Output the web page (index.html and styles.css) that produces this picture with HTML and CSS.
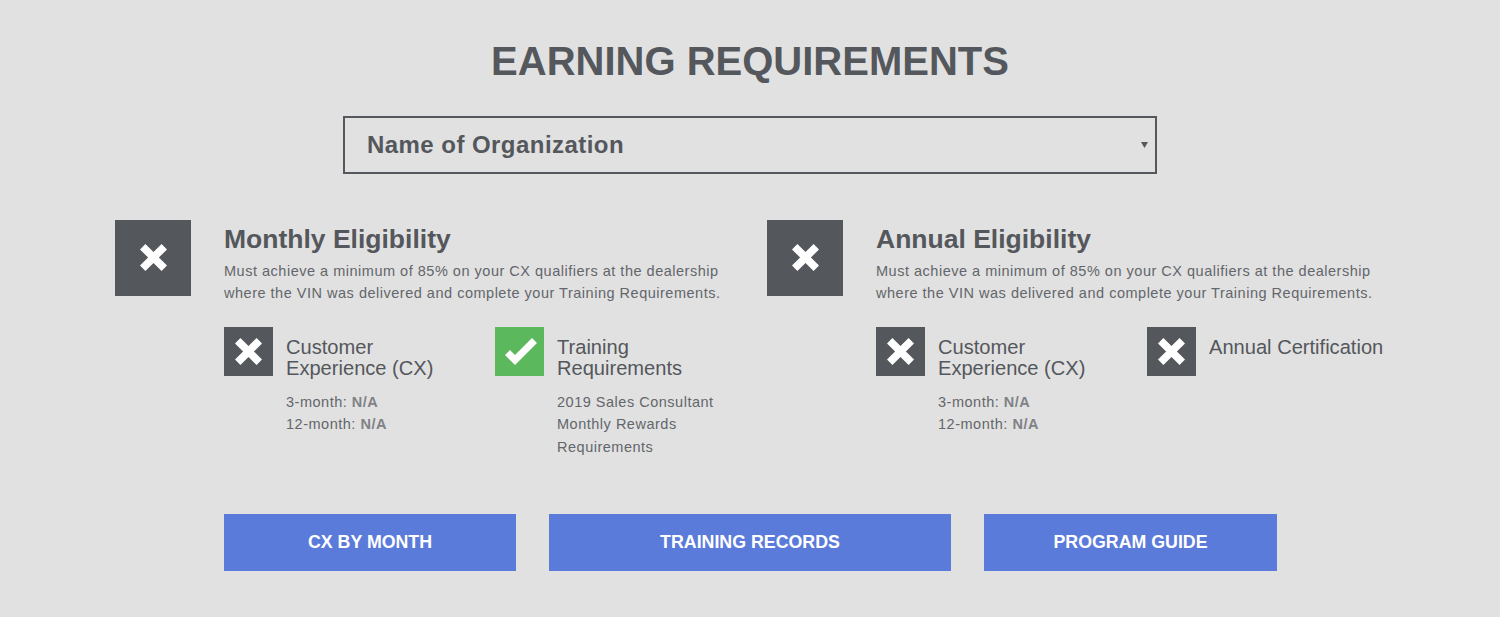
FILE: index.html
```html
<!DOCTYPE html>
<html lang="en">
<head>
    <meta charset="UTF-8">
    <meta name="viewport" content="width=device-width, initial-scale=1.0">
    <title>Earning Requirements</title>
    <link rel="stylesheet" href="styles.css">
</head>
<body>
    <div class="container">
        <h1>EARNING REQUIREMENTS</h1>

        <div class="org-select">
            <span>Name of Organization</span>
            <svg class="org-arrow" viewBox="0 0 7 6"><path d="M0 0H7L3.500 6Z"/></svg>
        </div>

        <div class="columns">
            <!-- Monthly -->
            <section class="column">
                <div class="status status-large">
                    <svg class="icon-x" viewBox="4 4 20 20"><path class="mark" d="M4 8 8 4l6 6 6-6 4 4-6 6 6 6-4 4-6-6-6 6-4-4 6-6Z"/></svg>
                </div>
                <div class="column-body">
                    <h2>Monthly Eligibility</h2>
                    <p class="summary">Must achieve a minimum of 85% on your CX qualifiers at the dealership<br>where the VIN was delivered and complete your Training Requirements.</p>
                    <div class="items">
                        <div class="item">
                            <div class="status">
                                <svg class="icon-x" viewBox="4 4 20 20"><path class="mark" d="M4 8 8 4l6 6 6-6 4 4-6 6 6 6-4 4-6-6-6 6-4-4 6-6Z"/></svg>
                            </div>
                            <div class="item-text">
                                <h3>Customer<br>Experience (CX)</h3>
                                <p>3-month: <b>N/A</b><br>12-month: <b>N/A</b></p>
                            </div>
                        </div>
                        <div class="item">
                            <div class="status status-ok">
                                <svg class="icon-check" viewBox="0 0 32 27"><path class="mark" d="M0 17 5 12 10 17 27 0 32 5 10 27Z"/></svg>
                            </div>
                            <div class="item-text">
                                <h3>Training<br>Requirements</h3>
                                <p>2019 Sales Consultant<br>Monthly Rewards<br>Requirements</p>
                            </div>
                        </div>
                    </div>
                </div>
            </section>

            <!-- Annual -->
            <section class="column">
                <div class="status status-large">
                    <svg class="icon-x" viewBox="4 4 20 20"><path class="mark" d="M4 8 8 4l6 6 6-6 4 4-6 6 6 6-4 4-6-6-6 6-4-4 6-6Z"/></svg>
                </div>
                <div class="column-body">
                    <h2>Annual Eligibility</h2>
                    <p class="summary">Must achieve a minimum of 85% on your CX qualifiers at the dealership<br>where the VIN was delivered and complete your Training Requirements.</p>
                    <div class="items">
                        <div class="item">
                            <div class="status">
                                <svg class="icon-x" viewBox="4 4 20 20"><path class="mark" d="M4 8 8 4l6 6 6-6 4 4-6 6 6 6-4 4-6-6-6 6-4-4 6-6Z"/></svg>
                            </div>
                            <div class="item-text">
                                <h3>Customer<br>Experience (CX)</h3>
                                <p>3-month: <b>N/A</b><br>12-month: <b>N/A</b></p>
                            </div>
                        </div>
                        <div class="item">
                            <div class="status">
                                <svg class="icon-x" viewBox="4 4 20 20"><path class="mark" d="M4 8 8 4l6 6 6-6 4 4-6 6 6 6-4 4-6-6-6 6-4-4 6-6Z"/></svg>
                            </div>
                            <div class="item-text">
                                <h3>Annual Certification</h3>
                            </div>
                        </div>
                    </div>
                </div>
            </section>
        </div>

        <div class="actions">
            <a class="btn btn-cx" href="#">CX BY MONTH</a>
            <a class="btn btn-training" href="#">TRAINING RECORDS</a>
            <a class="btn btn-guide" href="#">PROGRAM GUIDE</a>
        </div>
    </div>
</body>
</html>
```

FILE: styles.css
```css
* {
    margin: 0;
    padding: 0;
    box-sizing: border-box;
    font-family: 'Liberation Sans', Arial, sans-serif;
}

body {
    background: #e1e1e1;
    color: #54575c;
    overflow: hidden;
}

.container {
    width: 1500px;
    height: 617px;
    padding-top: 38px;
}

h1 {
    font-size: 40px;
    line-height: 46px;
    font-weight: bold;
    text-align: center;
}

.org-select {
    width: 814px;
    height: 58px;
    margin: 32px 0 0 343px;
    padding: 0 7px 0 22px;
    display: flex;
    justify-content: space-between;
    align-items: center;
    border: 2px solid #54575c;
    font-size: 24px;
    letter-spacing: 0.450px;
    font-weight: bold;
}

.org-arrow {
    width: 7px;
    height: 6px;
    fill: #54575c;
}

.columns {
    display: flex;
    margin: 46px 0 0 115px;
}

.column {
    width: 652px;
    display: flex;
    gap: 33px;
}

.status {
    flex: none;
    width: 49px;
    height: 49px;
    display: flex;
    justify-content: center;
    align-items: center;
    background: #54575c;
}

.icon-x {
    width: 27px;
    height: 27px;
    margin-bottom: 1px;
}

.icon-check {
    width: 32px;
    height: 27px;
    margin-left: 3px;
}

.status-large {
    width: 76px;
    height: 76px;
}

.status-ok {
    background: #5cb85c;
}

.mark {
    fill: #fff;
}

h2 {
    font-size: 26.500px;
    line-height: 38px;
    font-weight: bold;
}

.summary {
    font-size: 14.500px;
    letter-spacing: 0.510px;
    line-height: 22px;
    margin-top: 2px;
    color: #63666b;
    white-space: nowrap;
}

.items {
    display: flex;
    margin-top: 23px;
}

.item {
    width: 271px;
    display: flex;
    gap: 13px;
}

.item-text h3 {
    font-size: 20.100px;
    line-height: 21px;
    font-weight: normal;
    padding-top: 10px;
}

.item-text p {
    font-size: 14.500px;
    letter-spacing: 0.510px;
    line-height: 22.300px;
    margin-top: 12px;
    color: #63666b;
}

.item-text b {
    color: #808286;
}

.actions {
    position: absolute;
    top: 514px;
    left: 224px;
    display: flex;
    gap: 33px;
}

.btn {
    height: 57px;
    display: flex;
    justify-content: center;
    align-items: center;
    background: #5b7bdb;
    color: white;
    font-size: 17.800px;
    font-weight: bold;
    text-decoration: none;
}

.btn-cx {
    width: 292px;
}

.btn-training {
    width: 402px;
}

.btn-guide {
    width: 293px;
}
```
